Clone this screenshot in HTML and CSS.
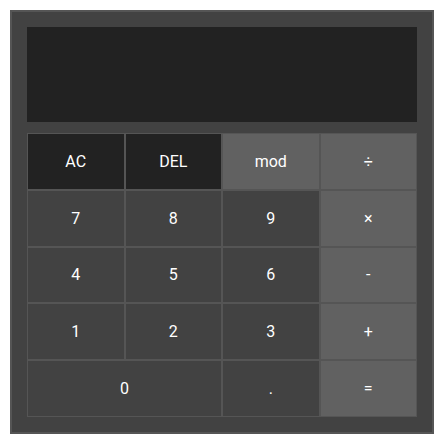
FILE: index.html
```html
<!DOCTYPE html>
<html>
<head>
<meta charset="utf-8">
<link rel="stylesheet" href="styles.css">
</head>
<body>
<div class="calc">
  <div class="display"></div>
  <div class="keys">
    <button class="key dark">AC</button>
    <button class="key dark">DEL</button>
    <button class="key op">mod</button>
    <button class="key op">÷</button>
    <button class="key">7</button>
    <button class="key">8</button>
    <button class="key">9</button>
    <button class="key op">×</button>
    <button class="key">4</button>
    <button class="key">5</button>
    <button class="key">6</button>
    <button class="key op">-</button>
    <button class="key">1</button>
    <button class="key">2</button>
    <button class="key">3</button>
    <button class="key op">+</button>
    <button class="key wide">0</button>
    <button class="key">.</button>
    <button class="key op">=</button>
  </div>
</div>
</body>
</html>
```
FILE: styles.css
```css
html, body {
  margin: 0;
  padding: 0;
  background: #ffffff;
}
body {
  padding: 10px;
}
.calc {
  width: 390px;
  padding: 15px;
  background: #424242;
  border: 2px solid #555555;
  display: flex;
  flex-direction: column;
  gap: 11px;
}
.display {
  height: 95px;
  background: #222222;
}
.keys {
  height: 284px;
  display: grid;
  grid-template-columns: repeat(4, 1fr);
  grid-template-rows: repeat(5, 1fr);
}
.key {
  margin: 0;
  padding: 0;
  border: 1px solid #555555;
  background: #424242;
  color: #ffffff;
  font-family: Roboto, "Liberation Sans", sans-serif;
  font-size: 16px;
  display: flex;
  align-items: center;
  justify-content: center;
}
.key.dark {
  background: #222222;
}
.key.op {
  background: #616161;
}
.key.wide {
  grid-column: span 2;
}
```
